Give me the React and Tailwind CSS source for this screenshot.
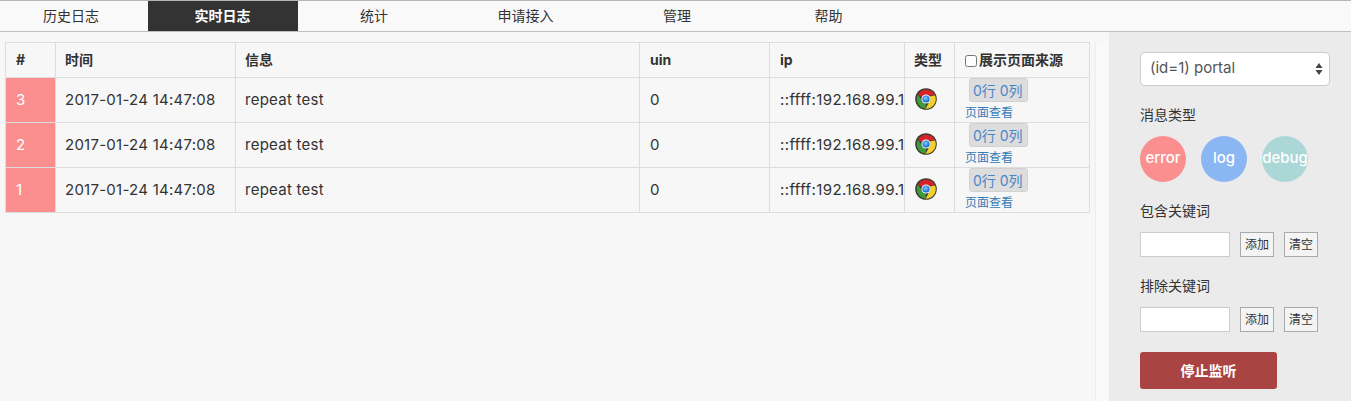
import React from 'react';

const tabs = ['历史日志', '实时日志', '统计', '申请接入', '管理', '帮助'];
const rows = [3, 2, 1];
const fontStack = "font-['Inter','Noto_Sans_CJK_SC',sans-serif]";

function ChromeIcon() {
  return (
    <svg width="22" height="22" viewBox="0 0 22 22" className="-mt-[3px]">
      <defs>
        <radialGradient id="chromeBlue" cx="45%" cy="40%" r="60%">
          <stop offset="0%" stopColor="#7fd0ff" />
          <stop offset="100%" stopColor="#0a5fd0" />
        </radialGradient>
      </defs>
      <circle cx="11" cy="11" r="10.8" fill="#3c3c30" />
      <path d="M3 6.5A9.6 9.6 0 0 1 20 7.4H11A4 4 0 0 0 7.3 9.6Z" fill="#d8222a" />
      <path d="M20 7.4A9.6 9.6 0 0 1 10.6 20.7L14.4 13.4A4 4 0 0 0 14.4 8.6Z" fill="#f3cf2e" />
      <path d="M10.6 20.7A9.6 9.6 0 0 1 3 6.5L7.3 13.4A4 4 0 0 0 11 15Z" fill="#3f9a3c" />
      <circle cx="11" cy="11" r="4.6" fill="#eef2f4" />
      <circle cx="11" cy="11" r="3.6" fill="url(#chromeBlue)" />
    </svg>
  );
}

function KeywordFilter({ label }) {
  return (
    <div>
      <div className="text-[14px] leading-[18px] text-[#333]">{label}</div>
      <div className="mt-[12px] flex items-center">
        <input className="h-[25px] w-[90px] border border-[#ccc] bg-white" />
        <button className="ml-[10px] h-[25px] w-[34px] border border-[#aaa] bg-[#f4f4f4] text-[12px] text-[#333]">添加</button>
        <button className="ml-[10px] h-[25px] w-[34px] border border-[#aaa] bg-[#f4f4f4] text-[12px] text-[#333]">清空</button>
      </div>
    </div>
  );
}

export default function App() {
  return (
    <div className={`flex h-[401px] w-[1351px] flex-col overflow-hidden bg-[#f7f7f7] text-[#333] ${fontStack}`}>
      <div className="flex h-[32px] shrink-0 gap-[1.5px] overflow-hidden border-t border-b border-t-[#b5b5b5] border-b-[#c0c0c0] bg-[#f9f9f9]">
        {tabs.map((tab, i) => (
          <div
            key={tab}
            className={`flex w-[150px] shrink-0 items-center justify-center pb-[2px] text-[14px] first:-ml-[4px] ${
              i === 1 ? 'bg-[#333] font-bold text-white' : 'text-[#333]'
            }`}
          >
            {tab}
          </div>
        ))}
      </div>

      <div className="flex min-h-0 flex-1">
        <div className="w-[1090px] shrink-0 pt-[10px] pl-[5px]">
          <table className="w-[1084px] table-fixed border-collapse text-[15px] tracking-[0.25px]">
            <colgroup>
              <col className="w-[50px]" />
              <col className="w-[180px]" />
              <col className="w-[404px]" />
              <col className="w-[130px]" />
              <col className="w-[135px]" />
              <col className="w-[50px]" />
              <col className="w-[135px]" />
            </colgroup>
            <thead>
              <tr className="h-[35px] text-left text-[14px] font-bold tracking-normal">
                <th className="border border-[#ddd] pb-[2px] pl-[10px]">#</th>
                <th className="border border-[#ddd] pb-[2px] pl-[9px]">时间</th>
                <th className="border border-[#ddd] pb-[2px] pl-[9px]">信息</th>
                <th className="border border-[#ddd] pb-[2px] pl-[10px]">uin</th>
                <th className="border border-[#ddd] pb-[2px] pl-[10px]">ip</th>
                <th className="border border-[#ddd] pb-[2px] pl-[9px]">类型</th>
                <th className="border border-[#ddd] pb-[2px] pl-[10px]">
                  <label className="flex items-center whitespace-nowrap">
                    <input type="checkbox" className="mt-[3px] mr-[2px] h-[12px] w-[12px]" />
                    展示页面来源
                  </label>
                </th>
              </tr>
            </thead>
            <tbody>
              {rows.map((n) => (
                <tr key={n} className="h-[45px]">
                  <td className="border border-[#ddd] bg-[#fb8f8f] pl-[10px] text-white">{n}</td>
                  <td className="border border-[#ddd] pl-[9px] whitespace-nowrap">2017-01-24 14:47:08</td>
                  <td className="border border-[#ddd] pl-[9px]">repeat test</td>
                  <td className="border border-[#ddd] pl-[10px]">0</td>
                  <td className="overflow-hidden border border-[#ddd] pl-[10px] tracking-[0.4px] whitespace-nowrap">::ffff:192.168.99.1</td>
                  <td className="border border-[#ddd] pl-[10px]">
                    <ChromeIcon />
                  </td>
                  <td className="border border-[#ddd] pl-[10px] align-top tracking-normal">
                    <div className="ml-[4px] flex h-[24px] w-[59px] items-center rounded-[3px] border border-[#d2d2d2] bg-[#ddd] pl-[3px] text-[14px] text-[#4a86c8]">
                      0行 0列
                    </div>
                    <a className="mt-[3px] block text-[12px] leading-[15px] text-[#337ab7]">页面查看</a>
                  </td>
                </tr>
              ))}
            </tbody>
          </table>
        </div>

        <div className="mt-[10px] ml-[5px] w-[14px] shrink-0 border-l border-l-[#eee] bg-[#f9f9f9]" />

        <div className="flex flex-1 flex-col bg-[#ebebeb] pt-[20px] pl-[31px]">
          <div className="flex h-[34px] w-[190px] items-center justify-between rounded-[5px] border border-[#ccc] bg-white pr-[6px] pb-[1px] pl-[9px] text-[15px] text-[#555]">
            <span>(id=1) portal</span>
            <svg width="8" height="14" viewBox="0 0 8 14" className="mt-[1px]">
              <path d="M4 1L7.5 6H.5Z" fill="#444" />
              <path d="M4 13L.5 8H7.5Z" fill="#444" />
            </svg>
          </div>

          <div className="mt-[20px] text-[14px] leading-[18px]">消息类型</div>
          <div className="mt-[12px] flex gap-[15px] text-[15px] font-medium text-white">
            <div className="flex h-[46px] w-[46px] items-center justify-center rounded-full bg-[#fb8f8f] pb-[1px]">error</div>
            <div className="flex h-[46px] w-[46px] items-center justify-center rounded-full bg-[#8ab6f4] pb-[1px]">log</div>
            <div className="flex h-[46px] w-[46px] items-center justify-center rounded-full bg-[#abd7d7] pb-[1px]">debug</div>
          </div>

          <div className="mt-[20px]">
            <KeywordFilter label="包含关键词" />
          </div>
          <div className="mt-[20px]">
            <KeywordFilter label="排除关键词" />
          </div>

          <button className="mt-[20px] h-[37px] w-[137px] rounded-[3px] bg-[#a94442] text-[14px] font-bold text-white">停止监听</button>
        </div>
      </div>
    </div>
  );
}
